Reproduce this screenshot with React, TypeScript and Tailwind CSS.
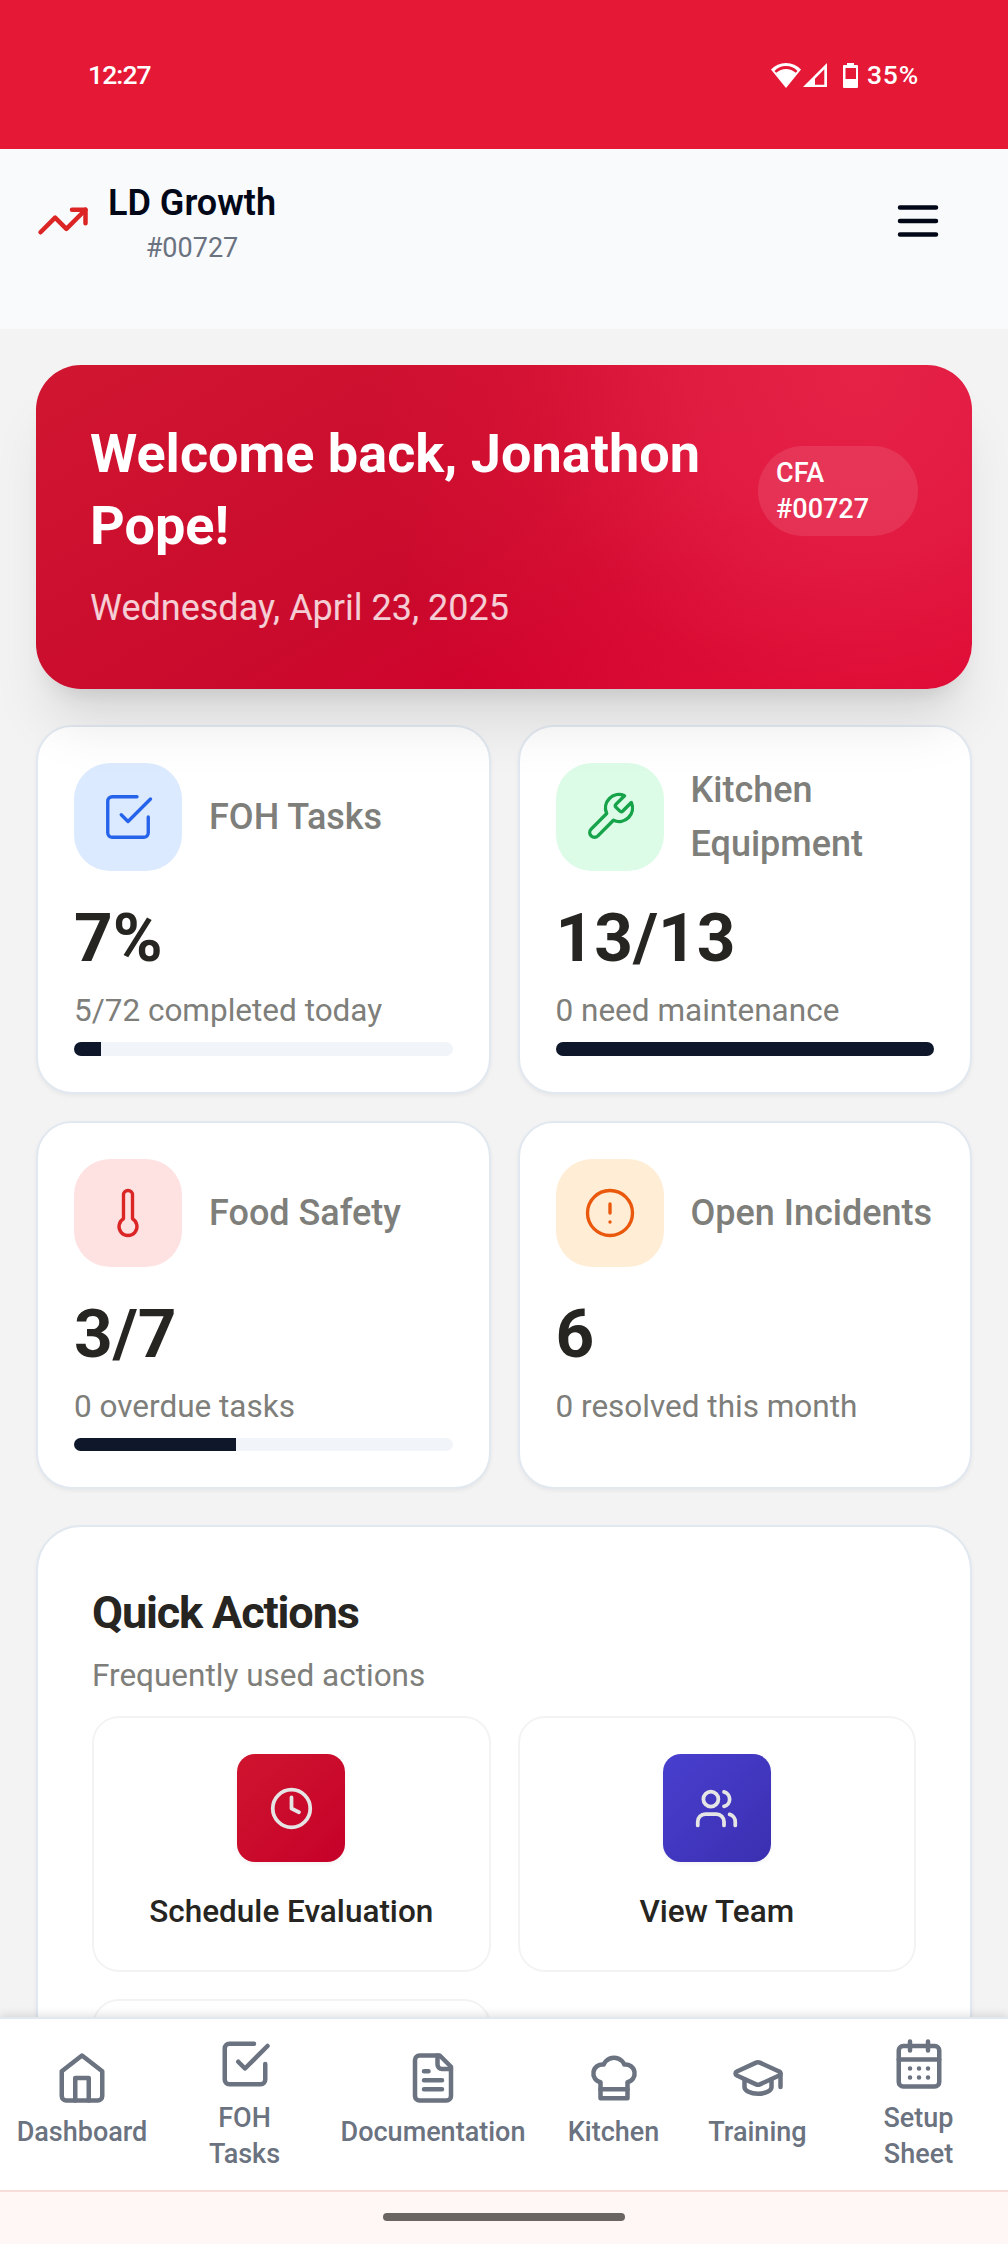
import type { ReactNode } from "react";

type IconProps = { className?: string; strokeWidth?: number; children?: ReactNode };

function Icon({ className = "size-[54px]", strokeWidth = 2, children }: IconProps) {
  return (
    <svg
      viewBox="0 0 24 24"
      fill="none"
      stroke="currentColor"
      strokeWidth={strokeWidth}
      strokeLinecap="round"
      strokeLinejoin="round"
      className={`shrink-0 ${className}`}
    >
      {children}
    </svg>
  );
}

const checkSquare = (
  <>
    <path d="m9 11 3 3L22 4" />
    <path d="M21 12v7a2 2 0 0 1-2 2H5a2 2 0 0 1-2-2V5a2 2 0 0 1 2-2h11" />
  </>
);
const wrench = (
  <path d="M14.7 6.3a1 1 0 0 0 0 1.4l1.6 1.6a1 1 0 0 0 1.4 0l3.77-3.77a6 6 0 0 1-7.94 7.94l-6.91 6.91a2.12 2.12 0 0 1-3-3l6.91-6.91a6 6 0 0 1 7.94-7.94l-3.76 3.76z" />
);
const thermometer = <path d="M14 4v10.54a4 4 0 1 1-4 0V4a2 2 0 0 1 4 0Z" />;
const alertCircle = (
  <>
    <circle cx="12" cy="12" r="10" />
    <path d="M12 8v4M12 16h.01" />
  </>
);
const clock = (
  <>
    <circle cx="12" cy="12" r="10" />
    <path d="M12 6v6l4 2" />
  </>
);
const users = (
  <>
    <path d="M16 21v-2a4 4 0 0 0-4-4H6a4 4 0 0 0-4 4v2" />
    <circle cx="9" cy="7" r="4" />
    <path d="M22 21v-2a4 4 0 0 0-3-3.87M16 3.13a4 4 0 0 1 0 7.75" />
  </>
);
const house = (
  <>
    <path d="m3 9 9-7 9 7v11a2 2 0 0 1-2 2H5a2 2 0 0 1-2-2z" />
    <path d="M9 22V12h6v10" />
  </>
);
const fileText = (
  <>
    <path d="M15 2H6a2 2 0 0 0-2 2v16a2 2 0 0 0 2 2h12a2 2 0 0 0 2-2V7Z" />
    <path d="M14 2v4a2 2 0 0 0 2 2h4M10 9H8M16 13H8M16 17H8" />
  </>
);
const chefHat = (
  <>
    <path d="M6 13.87A4 4 0 0 1 7.41 6a5.11 5.11 0 0 1 1.05-1.54 5 5 0 0 1 7.08 0A5.11 5.11 0 0 1 16.59 6 4 4 0 0 1 18 13.87V21H6Z" />
    <path d="M6 17h12" />
  </>
);
const gradCap = (
  <>
    <path d="M21.42 10.922a1 1 0 0 0-.019-1.838L12.83 5.18a2 2 0 0 0-1.66 0L2.6 9.08a1 1 0 0 0 0 1.832l8.57 3.908a2 2 0 0 0 1.66 0z" />
    <path d="M22 10v6M6 12.5V16a6 3 0 0 0 12 0v-3.5" />
  </>
);
const calendar = (
  <>
    <path d="M8 2v4M16 2v4M3 10h18" />
    <rect width="18" height="18" x="3" y="4" rx="2" />
    <path d="M8 14h.01M12 14h.01M16 14h.01M8 18h.01M12 18h.01M16 18h.01" />
  </>
);

function StatusBar() {
  return (
    <div className="flex h-[149px] shrink-0 items-center justify-between bg-[#e51836] pr-[87px] pl-[88px] text-[26.5px] font-medium text-white">
      <span className="tracking-[-0.9px]">12:27</span>
      <div className="flex items-center">
        <svg viewBox="0 0 30 26" className="h-[26px] w-[30px]">
          <path d="M15 26 0 7.5C4 3.2 9 1 15 1s11 2.200 15 6.500Z" fill="#fff" />
          <path d="M3.500 9C6.500 5.600 10.500 4 15 4s8.500 1.600 11.500 5l-1.700 1.800C22 8.300 18.600 7 15 7s-7 1.300-9.800 3.800Z" fill="#e51836" />
        </svg>
        <svg viewBox="0 0 26 26" className="ml-px h-[26px] w-[26px]">
          <path d="M25 1v24H1Z M22.300 7.300 13 16.800v6h9.300Z" fill="#fff" fillRule="evenodd" />
        </svg>
        <svg viewBox="0 0 15 26" className="ml-[15px] h-[26px] w-[15px]">
          <path d="M4 1h7v2h3a1 1 0 0 1 1 1v21a1 1 0 0 1-1 1H1a1 1 0 0 1-1-1V4a1 1 0 0 1 1-1h3Z M2.500 6v11h10.500V6Z" fill="#fff" fillRule="evenodd" />
        </svg>
        <span className="ml-[9px] w-[54px] tracking-[0.8px]">35%</span>
      </div>
    </div>
  );
}

function Header() {
  return (
    <header className="flex h-[180px] shrink-0 items-start justify-between bg-[#f9fafc] pt-[27px] pr-[63px] pl-9">
      <div className="flex items-center gap-[18px]">
        <Icon className="size-[54px] text-[#dc2626]">
          <path d="M22 7 13.500 15.500l-5-5L2 17" />
          <path d="M16 7h6v6" />
        </Icon>
        <div className="flex flex-col items-center">
          <span className="text-[36px] leading-[54px] font-semibold text-[#020817]">LD Growth</span>
          <span className="text-[27px] leading-[36px] text-[#6b7280]">#00727</span>
        </div>
      </div>
      <button className="flex h-[90px] items-center text-[#020817]">
        <Icon>
          <path d="M4 6h16M4 12h16M4 18h16" />
        </Icon>
      </button>
    </header>
  );
}

function Hero() {
  return (
    <section className="relative z-10 h-[324px] shrink-0 rounded-[45px] bg-[radial-gradient(circle_at_88%_4%,#e62247_0px,rgba(230,32,70,0.8)_170px,rgba(228,26,62,0.35)_330px,rgba(226,10,54,0)_500px),linear-gradient(150deg,#d01631_0%,#ca0a2c_50%,#d0032d_66%,#de0532_100%)] p-[54px] text-white shadow-[0_45px_56px_-11px_rgba(0,0,0,0.1),0_18px_22.500px_-13.500px_rgba(0,0,0,0.1)]">
      <div className="flex items-center justify-between">
        <h1 className="-mt-px mb-px w-[640px] text-[54px] leading-[72px] font-bold">Welcome back, Jonathon Pope!</h1>
        <div className="w-[160px] rounded-[45px] bg-white/10 px-[18px] py-[9px] text-[27px] leading-[36px] font-medium">
          CFA #00727
        </div>
      </div>
      <p className="mt-[18px] text-[36px] leading-[54px] text-white/80">Wednesday, April 23, 2025</p>
    </section>
  );
}

type Stat = {
  label: string;
  value: string;
  note: string;
  progress?: number;
  tile: string;
  icon: ReactNode;
};

const stats: Stat[] = [
  { label: "FOH Tasks", value: "7%", note: "5/72 completed today", progress: 7.1, tile: "bg-[#dbeafe] text-[#2563eb]", icon: checkSquare },
  { label: "Kitchen Equipment", value: "13/13", note: "0 need maintenance", progress: 100, tile: "bg-[#dcfce7] text-[#16a34a]", icon: wrench },
  { label: "Food Safety", value: "3/7", note: "0 overdue tasks", progress: 42.9, tile: "bg-[#fee2e2] text-[#dc2626]", icon: thermometer },
  { label: "Open Incidents", value: "6", note: "0 resolved this month", tile: "bg-[#ffedd5] text-[#ea580c]", icon: alertCircle },
];

function StatCard({ label, value, note, progress, tile, icon }: Stat) {
  return (
    <div className="h-[368.5px] rounded-[36px] border-2 border-[#e2e8f0] bg-white p-9 shadow-[0_2px_4.500px_rgba(0,0,0,0.05)]">
      <div className="flex items-center gap-[27px]">
        <div className={`flex size-[108px] shrink-0 items-center justify-center rounded-[36px] ${tile}`}>
          <Icon strokeWidth={1.5}>{icon}</Icon>
        </div>
        <span className="-mr-4 text-[36px] leading-[54px] font-medium text-[#7e7e7a]">{label}</span>
      </div>
      <div className="mt-[26px] text-[67.500px] leading-[81px] font-bold text-[#262521]">{value}</div>
      <div className="mt-[10px] text-[31.500px] leading-[45px] text-[#7e7e7a]">{note}</div>
      {progress !== undefined && (
        <div className="mt-[9px] h-[13.5px] overflow-hidden rounded-full bg-[#f1f5f9]">
          <div className="h-full bg-[#0f172a]" style={{ width: `${progress}%` }} />
        </div>
      )}
    </div>
  );
}

function Action({ label, tile, icon }: { label: string; tile: string; icon: ReactNode }) {
  return (
    <button className="flex h-[256px] flex-col items-center rounded-[27px] border-2 border-[#f3f3f3] bg-white pt-9">
      <span className={`flex size-[108px] items-center justify-center rounded-[18px] text-[#e5e5e5] shadow-[0_2px_4.500px_rgba(0,0,0,0.05)] ${tile}`}>
        <Icon className="size-[45px]">{icon}</Icon>
      </span>
      <span className="mt-[27px] text-[31.500px] leading-[45px] font-medium text-[#262521]">{label}</span>
    </button>
  );
}

function QuickActions() {
  return (
    <section className="mt-9 h-[900px] shrink-0 rounded-[45px] border-2 border-[#e2e8f0] bg-white p-[54px] shadow-[0_2px_4.500px_rgba(0,0,0,0.05)]">
      <h2 className="text-[45px] leading-[63px] font-bold tracking-[-0.025em] text-[#262521]">Quick Actions</h2>
      <p className="mt-[9px] text-[31.500px] leading-[45px] text-[#7e7e7a]">Frequently used actions</p>
      <div className="mt-[18px] grid grid-cols-2 gap-[27px]">
        <Action label="Schedule Evaluation" tile="bg-linear-to-br from-[#cf142f] to-[#c60029]" icon={clock} />
        <Action label="View Team" tile="bg-linear-to-br from-[#483fcf] to-[#3b2fb0]" icon={users} />
        <div className="h-[256px] rounded-[27px] border-2 border-[#f3f3f3]" />
      </div>
    </section>
  );
}

const navItems = [
  { label: "Dashboard", width: "w-[164px]", text: "", icon: house },
  { label: "FOH Tasks", width: "w-[161px]", text: "w-[90px]", icon: checkSquare },
  { label: "Documentation", width: "w-[216px]", text: "", icon: fileText },
  { label: "Kitchen", width: "w-[145px]", text: "", icon: chefHat },
  { label: "Training", width: "w-[143px]", text: "", icon: gradCap },
  { label: "Setup Sheet", width: "w-[179px]", text: "w-[90px]", icon: calendar },
];

function BottomNav() {
  return (
    <nav className="relative z-20 flex h-[173px] shrink-0 items-center border-t-2 border-[#e2e8f0] bg-white text-[#6b7280] shadow-[0_-2px_9px_rgba(0,0,0,0.12)]">
      {navItems.map(({ label, width, text, icon }) => (
        <button key={label} className={`flex min-h-[108px] flex-col items-center gap-[9px] ${width}`}>
          <Icon>{icon}</Icon>
          <span className={`text-center text-[27px] leading-[36px] font-medium ${text}`}>{label}</span>
        </button>
      ))}
    </nav>
  );
}

export default function App() {
  return (
    <div className="flex h-[2244px] w-[1008px] flex-col overflow-hidden bg-[#f3f3f3] font-['Roboto',sans-serif]">
      <StatusBar />
      <Header />
      <main className="flex min-h-0 flex-1 flex-col overflow-hidden p-9">
        <Hero />
        <div className="mt-9 grid shrink-0 grid-cols-2 gap-[27px]">
          {stats.map((s) => (
            <StatCard key={s.label} {...s} />
          ))}
        </div>
        <QuickActions />
      </main>
      <BottomNav />
      <div className="relative z-20 flex h-[54px] shrink-0 items-start justify-center border-t-2 border-[#f6dcda] bg-[#fef7f5] pt-[21px]">
        <div className="h-2 w-[242px] rounded-full bg-[#6a6462]" />
      </div>
    </div>
  );
}
